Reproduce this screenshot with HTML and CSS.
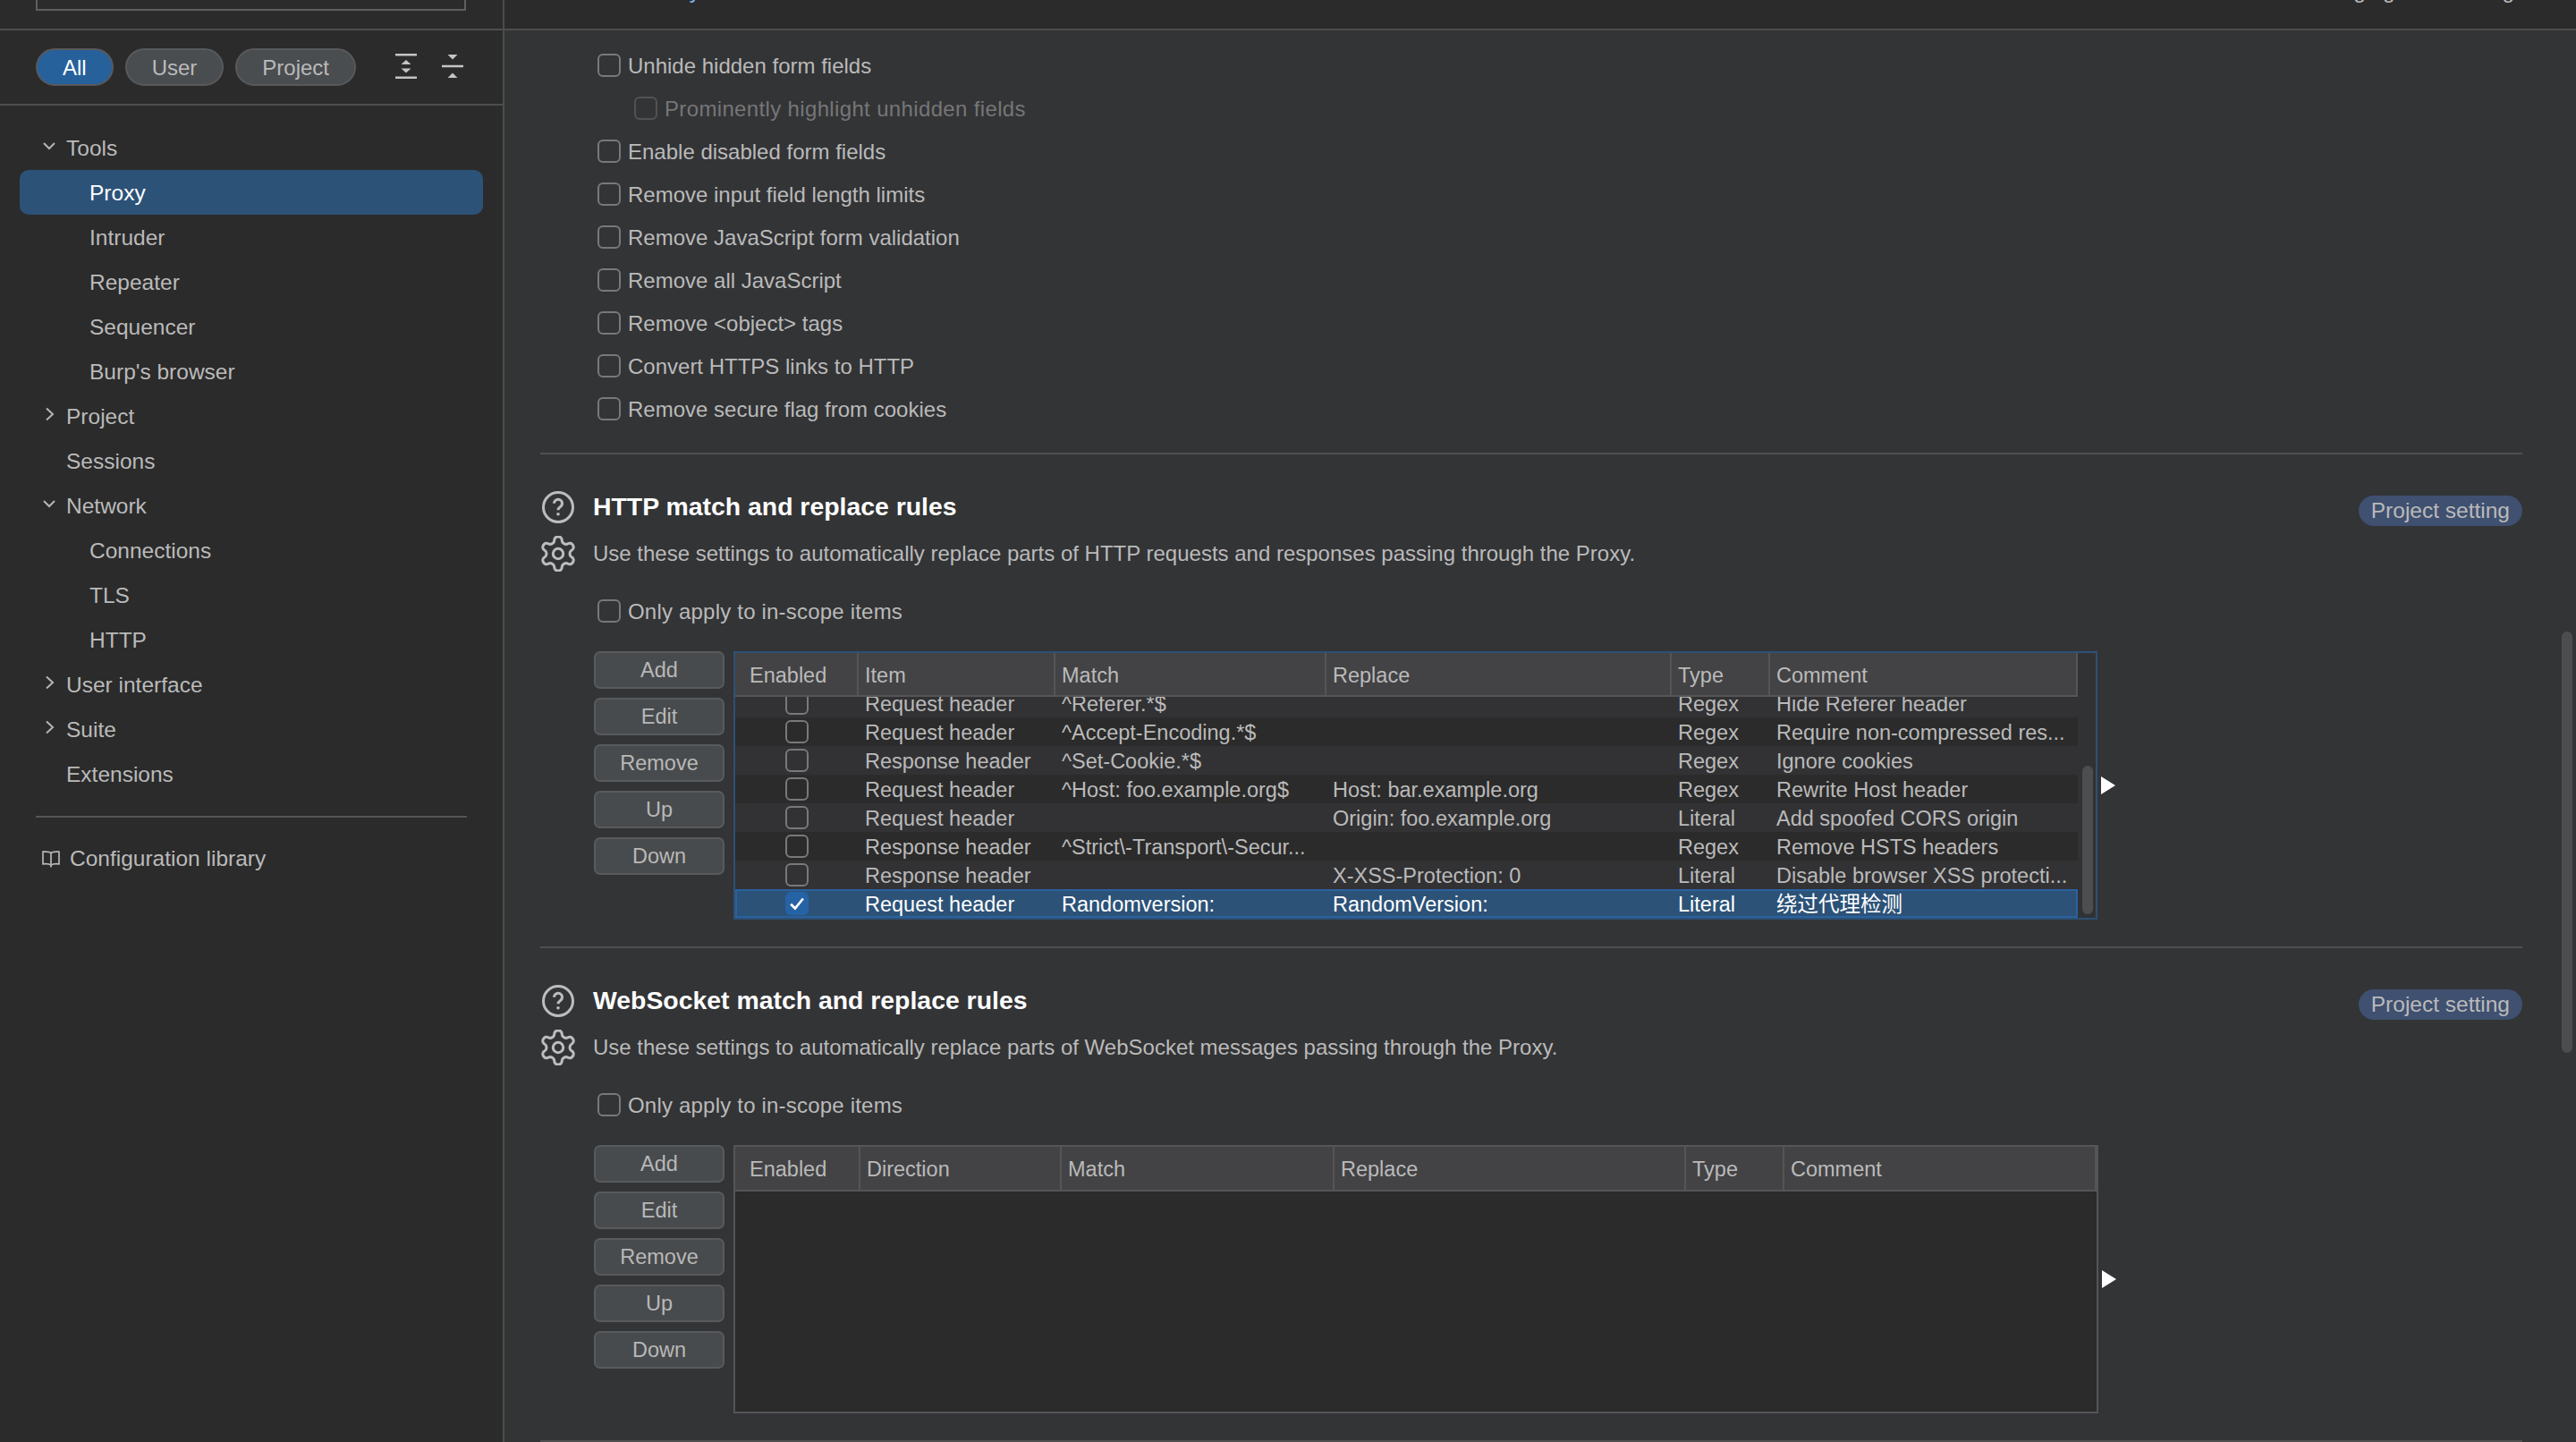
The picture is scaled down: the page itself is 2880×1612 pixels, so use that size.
FILE: index.html
```html
<!DOCTYPE html>
<html lang="en">
  <head>
    <meta charset="UTF-8" />
    <title>Proxy settings</title>
    <link rel="stylesheet" href="styles.css">
  </head>
  <body>
    <div class="app">
      <aside class="sidebar">
        <div class="side-top">
          <div class="search">
            <span>Search</span>
            <svg class="search-icon" viewBox="0 0 24 24"><circle cx="10" cy="10" r="7"/><path d="M15 15l6 6"/></svg>
          </div>
        </div>

        <div class="filters">
          <span class="pill active">All</span>
          <span class="pill">User</span>
          <span class="pill">Project</span>
          <svg class="tree-icon first" viewBox="0 0 24 28"><path d="M0 0h24v2.500H0zM0 25.500h24V28H0zM12 7l5.500 5h-11zM12 21.500l-5.500-5h11z"/></svg>
          <svg class="tree-icon" viewBox="0 0 24 28"><path d="M6.500 1h11L12 6.500zM0 12.800h24v2.400H0zM12 21.500l5.500 5.500h-11z"/></svg>
        </div>

        <nav class="nav">
          <div class="nav-row parent"><svg class="chev" viewBox="0 0 16 16"><path d="M2 5l6 6 6-6"/></svg>Tools</div>
          <div class="nav-row child selected">Proxy</div>
          <div class="nav-row child">Intruder</div>
          <div class="nav-row child">Repeater</div>
          <div class="nav-row child">Sequencer</div>
          <div class="nav-row child">Burp's browser</div>
          <div class="nav-row parent"><svg class="chev" viewBox="0 0 16 16"><path d="M5 1.500l7 6.500-7 6.500"/></svg>Project</div>
          <div class="nav-row leaf">Sessions</div>
          <div class="nav-row parent"><svg class="chev" viewBox="0 0 16 16"><path d="M2 5l6 6 6-6"/></svg>Network</div>
          <div class="nav-row child">Connections</div>
          <div class="nav-row child">TLS</div>
          <div class="nav-row child">HTTP</div>
          <div class="nav-row parent"><svg class="chev" viewBox="0 0 16 16"><path d="M5 1.500l7 6.500-7 6.500"/></svg>User interface</div>
          <div class="nav-row parent"><svg class="chev" viewBox="0 0 16 16"><path d="M5 1.500l7 6.500-7 6.500"/></svg>Suite</div>
          <div class="nav-row leaf">Extensions</div>
        </nav>

        <div class="side-divider"></div>

        <div class="config-link">
          <svg class="book" viewBox="0 0 20 20"><path d="M10 3.500C8 1.800 5 1.800 1 2.200v13.600c4-.4 7-.4 9 1.300 2-1.700 5-1.700 9-1.300V2.200c-4-.4-7-.4-9 1.300zM10 3.500V19.500"/></svg>
          Configuration library
        </div>
      </aside>

      <main class="main">
        <div class="top-bar">
          <span>Use the <span class="link">library</span></span>
          <span>managing user settings?</span>
        </div>

        <section class="section options">
          <label class="check"><span class="box"></span>Unhide hidden form fields</label>
          <label class="check sub disabled"><span class="box"></span>Prominently highlight unhidden fields</label>
          <label class="check"><span class="box"></span>Enable disabled form fields</label>
          <label class="check"><span class="box"></span>Remove input field length limits</label>
          <label class="check"><span class="box"></span>Remove JavaScript form validation</label>
          <label class="check"><span class="box"></span>Remove all JavaScript</label>
          <label class="check"><span class="box"></span>Remove &lt;object&gt; tags</label>
          <label class="check"><span class="box"></span>Convert HTTPS links to HTTP</label>
          <label class="check"><span class="box"></span>Remove secure flag from cookies</label>
        </section>

        <section class="section">
          <div class="head">
            <svg class="head-icon" viewBox="0 0 40 40"><circle cx="20" cy="20" r="16.500"/><path d="M15.500 15.800a4.500 4.500 0 1 1 7 3.700c-1.600 1.100-2.500 2-2.500 3.700"/><circle class="dot" cx="20" cy="27.800" r="1.800"/></svg>
            <h2>HTTP match and replace rules</h2>
            <span class="badge">Project setting</span>
          </div>
          <div class="head desc">
            <svg class="head-icon gear" viewBox="1.500 1.500 21 21"><path d="M12.220 2h-.44a2 2 0 0 0-2 2v.18a2 2 0 0 1-1 1.730l-.43.250a2 2 0 0 1-2 0l-.15-.08a2 2 0 0 0-2.730.730l-.22.380a2 2 0 0 0 .73 2.730l.15.100a2 2 0 0 1 1 1.720v.510a2 2 0 0 1-1 1.740l-.15.090a2 2 0 0 0-.73 2.730l.22.380a2 2 0 0 0 2.730.730l.15-.08a2 2 0 0 1 2 0l.43.250a2 2 0 0 1 1 1.730V20a2 2 0 0 0 2 2h.44a2 2 0 0 0 2-2v-.18a2 2 0 0 1 1-1.730l.43-.25a2 2 0 0 1 2 0l.15.080a2 2 0 0 0 2.730-.73l.22-.39a2 2 0 0 0-.73-2.730l-.15-.08a2 2 0 0 1-1-1.740v-.5a2 2 0 0 1 1-1.740l.15-.09a2 2 0 0 0 .73-2.730l-.22-.38a2 2 0 0 0-2.730-.73l-.15.080a2 2 0 0 1-2 0l-.43-.25a2 2 0 0 1-1-1.730V4a2 2 0 0 0-2-2z"/><circle cx="12" cy="12" r="3"/></svg>
            <p>Use these settings to automatically replace parts of HTTP requests and responses passing through the Proxy.</p>
          </div>
          <label class="check scope"><span class="box"></span>Only apply to in-scope items</label>

          <div class="rules">
            <div class="buttons">
              <button>Add</button>
              <button>Edit</button>
              <button>Remove</button>
              <button>Up</button>
              <button>Down</button>
            </div>

            <div class="table http">
              <div class="table-left">
                <div class="trow thead">
                  <div class="first-col">Enabled</div><div>Item</div><div>Match</div><div>Replace</div><div>Type</div><div>Comment</div>
                </div>
                <div class="tbody">
                  <div class="trow odd clipped">
                    <div class="cb-cell"><span class="box"></span></div><div>Request header</div><div>^Referer.*$</div><div></div><div>Regex</div><div>Hide Referer header</div>
                  </div>
                  <div class="trow even">
                    <div class="cb-cell"><span class="box"></span></div><div>Request header</div><div>^Accept-Encoding.*$</div><div></div><div>Regex</div><div>Require non-compressed res...</div>
                  </div>
                  <div class="trow odd">
                    <div class="cb-cell"><span class="box"></span></div><div>Response header</div><div>^Set-Cookie.*$</div><div></div><div>Regex</div><div>Ignore cookies</div>
                  </div>
                  <div class="trow even">
                    <div class="cb-cell"><span class="box"></span></div><div>Request header</div><div>^Host: foo.example.org$</div><div>Host: bar.example.org</div><div>Regex</div><div>Rewrite Host header</div>
                  </div>
                  <div class="trow odd">
                    <div class="cb-cell"><span class="box"></span></div><div>Request header</div><div></div><div>Origin: foo.example.org</div><div>Literal</div><div>Add spoofed CORS origin</div>
                  </div>
                  <div class="trow even">
                    <div class="cb-cell"><span class="box"></span></div><div>Response header</div><div>^Strict\-Transport\-Secur...</div><div></div><div>Regex</div><div>Remove HSTS headers</div>
                  </div>
                  <div class="trow odd">
                    <div class="cb-cell"><span class="box"></span></div><div>Response header</div><div></div><div>X-XSS-Protection: 0</div><div>Literal</div><div>Disable browser XSS protecti...</div>
                  </div>
                  <div class="trow picked">
                    <div class="cb-cell"><span class="box on"><svg viewBox="0 0 16 16"><path d="M3 8.500l3.500 3.500L13 4"/></svg></span></div><div>Request header</div><div>Randomversion:</div><div>RandomVersion:</div><div>Literal</div><div>绕过代理检测</div>
                  </div>
                </div>
              </div>
              <div class="table-scroll"><div class="thumb"></div></div>
            </div>
            <span class="arrow"></span>
          </div>
        </section>

        <section class="section">
          <div class="head">
            <svg class="head-icon" viewBox="0 0 40 40"><circle cx="20" cy="20" r="16.500"/><path d="M15.500 15.800a4.500 4.500 0 1 1 7 3.700c-1.600 1.100-2.500 2-2.500 3.700"/><circle class="dot" cx="20" cy="27.800" r="1.800"/></svg>
            <h2>WebSocket match and replace rules</h2>
            <span class="badge">Project setting</span>
          </div>
          <div class="head desc">
            <svg class="head-icon gear" viewBox="1.500 1.500 21 21"><path d="M12.220 2h-.44a2 2 0 0 0-2 2v.18a2 2 0 0 1-1 1.730l-.43.250a2 2 0 0 1-2 0l-.15-.08a2 2 0 0 0-2.730.730l-.22.380a2 2 0 0 0 .73 2.730l.15.100a2 2 0 0 1 1 1.720v.510a2 2 0 0 1-1 1.740l-.15.090a2 2 0 0 0-.73 2.730l.22.380a2 2 0 0 0 2.730.730l.15-.08a2 2 0 0 1 2 0l.43.250a2 2 0 0 1 1 1.730V20a2 2 0 0 0 2 2h.44a2 2 0 0 0 2-2v-.18a2 2 0 0 1 1-1.730l.43-.25a2 2 0 0 1 2 0l.15.080a2 2 0 0 0 2.730-.73l.22-.39a2 2 0 0 0-.73-2.730l-.15-.08a2 2 0 0 1-1-1.740v-.5a2 2 0 0 1 1-1.740l.15-.09a2 2 0 0 0 .73-2.730l-.22-.38a2 2 0 0 0-2.730-.73l-.15.080a2 2 0 0 1-2 0l-.43-.25a2 2 0 0 1-1-1.730V4a2 2 0 0 0-2-2z"/><circle cx="12" cy="12" r="3"/></svg>
            <p>Use these settings to automatically replace parts of WebSocket messages passing through the Proxy.</p>
          </div>
          <label class="check scope"><span class="box"></span>Only apply to in-scope items</label>

          <div class="rules">
            <div class="buttons">
              <button>Add</button>
              <button>Edit</button>
              <button>Remove</button>
              <button>Up</button>
              <button>Down</button>
            </div>

            <div class="table ws">
              <div class="table-left">
                <div class="trow thead">
                  <div class="first-col">Enabled</div><div>Direction</div><div>Match</div><div>Replace</div><div>Type</div><div>Comment</div>
                </div>
              </div>
            </div>
            <span class="arrow"></span>
          </div>
        </section>

        <div class="page-scroll"></div>
      </main>
    </div>
  </body>
</html>
```

FILE: styles.css
```css
* {
  box-sizing: border-box;
}

body {
  margin: 0;
  background-color: #333436;
  color: #bababa;
  font-family: "Liberation Sans", Arial, "Noto Sans CJK SC", sans-serif;
  font-size: 24.5px;
}

.app {
  display: flex;
  height: 1612px;
  overflow: hidden;
}

/* Sidebar */
.sidebar {
  width: 564px;
  flex: none;
  background-color: #2b2b2b;
  border-right: 2px solid #4c4c4c;
}

.side-top {
  height: 34px;
  padding: 0 41px 0 40px;
  border-bottom: 2px solid #4e4e4e;
  overflow: hidden;
}

.search {
  display: flex;
  justify-content: space-between;
  align-items: center;
  height: 42px;
  margin-top: -30px;
  padding: 0 21px;
  border: 2px solid #5f5f5f;
  line-height: 30px;
}

.search span {
  margin-top: -4px;
}

.search-icon {
  width: 24px;
  height: 24px;
  margin: 0 10px 2px 0;
  fill: none;
  stroke: #e0e0e0;
  stroke-width: 2.5;
}

.filters {
  display: flex;
  align-items: flex-start;
  gap: 13px;
  height: 84px;
  padding: 20px 0 0 40px;
  border-bottom: 2px solid #4e4e4e;
}

.pill {
  height: 42px;
  padding: 0 28px;
  border: 2px solid #58595b;
  border-radius: 21px;
  background-color: #4a4d50;
  font-size: 24px;
  line-height: 39px;
}

.pill.active {
  background-color: #26619c;
  color: #fff;
}

.tree-icon {
  width: 24px;
  height: 28px;
  margin: 6px 0 0 15px;
  fill: #c4c4c4;
}

.tree-icon.first {
  margin-left: 31px;
}

.nav {
  padding: 22px 22px 0;
}

.nav-row {
  display: flex;
  align-items: center;
  height: 50px;
  padding-top: 2px;
}

.nav-row.parent {
  padding-left: 25px;
}

.nav-row.leaf {
  padding-left: 52px;
}

.nav-row.child {
  padding-left: 78px;
}

.nav-row.selected {
  background-color: #2d5278;
  border-radius: 10px;
  color: #fff;
}

.chev {
  width: 16px;
  height: 16px;
  margin-right: 11px;
  margin-top: -6px;
  fill: none;
  stroke: #b5b5b5;
  stroke-width: 2;
}

.side-divider {
  height: 2px;
  margin: 22px 40px 0;
  background-color: #555;
}

.config-link {
  display: flex;
  align-items: center;
  gap: 11px;
  height: 50px;
  margin-top: 21px;
  padding-left: 47px;
}

.book {
  width: 20px;
  height: 20px;
  fill: none;
  stroke: #b8b8b8;
  stroke-width: 1.7;
}

/* Main panel */
.main {
  position: relative;
  flex: 1;
  min-width: 0;
  overflow: hidden;
}

.top-bar {
  display: flex;
  justify-content: space-between;
  height: 34px;
  padding: 0 43px 0 61px;
  background-color: #2b2b2b;
  border-bottom: 2px solid #4e4e4e;
  line-height: 30px;
  overflow: hidden;
}

.top-bar > span {
  margin-top: -25px;
}

.link {
  color: #7db7ee;
}

.section {
  margin: 0 60px 0 40px;
  padding: 34px 0 30px;
  border-bottom: 2px solid #505050;
}

.section.options {
  padding: 15px 0 25px;
}

.check {
  display: flex;
  align-items: center;
  gap: 8px;
  height: 48px;
  padding: 2px 0 0 64px;
  font-size: 24px;
}

.check.sub {
  padding-left: 105px;
  letter-spacing: 0.35px;
}

.check.disabled {
  color: #767676;
}

.check.disabled .box {
  border-color: #525252;
}

.check.scope {
  margin-top: 13px;
  letter-spacing: 0.2px;
}

.check .box {
  margin-top: -2px;
}

.box {
  display: block;
  width: 26px;
  height: 26px;
  flex: none;
  border: 2px solid #77797b;
  border-radius: 6px;
}

.box.on {
  background-color: #2563a5;
  border-color: #2563a5;
}

.box.on svg {
  display: block;
  fill: none;
  stroke: #fff;
  stroke-width: 2;
}

.head {
  display: flex;
  align-items: center;
  height: 50px;
}

.head.desc {
  height: 54px;
}

.head p {
  margin: 0;
  font-size: 24px;
}

h2 {
  margin: -2px 0 0;
  color: #fff;
  font-size: 28.4px;
  font-weight: bold;
}

.head-icon {
  width: 40px;
  height: 40px;
  flex: none;
  margin-right: 19px;
  fill: none;
  stroke: #bdbdbd;
  stroke-width: 3;
}

.head-icon .dot {
  fill: #bdbdbd;
  stroke: none;
}

.head-icon.gear {
  stroke-width: 1.6;
}

.badge {
  height: 34px;
  margin: 8px 0 0 auto;
  padding: 0 14px;
  background-color: #3f5070;
  border-radius: 17px;
  line-height: 33px;
}

/* Rule tables */
.rules {
  display: flex;
  align-items: center;
  margin: 21px 0 0 60px;
}

.buttons {
  display: flex;
  flex-direction: column;
  gap: 10px;
  width: 146px;
  height: 300px;
  margin-right: 10px;
}

button {
  height: 42px;
  padding: 0;
  background-color: #484b4d;
  border: 2px solid #585a5c;
  border-radius: 7px;
  color: #b8b8b8;
  font-family: inherit;
  font-size: 23.5px;
}

.table {
  display: flex;
  height: 300px;
  flex: none;
  border: 2px solid #555;
  background-color: #2b2b2b;
  font-size: 23.5px;
}

.table.http {
  width: 1525px;
  border-color: #2d5075;
  background-color: #313234;
}

.table.ws {
  width: 1526px;
}

.table-left {
  flex: 1;
  min-width: 0;
}

.trow {
  display: grid;
  grid-template-rows: 100%;
  height: 32px;
  line-height: 35px;
  white-space: nowrap;
}

.http .trow {
  grid-template-columns: 138px 220px 303px 386px 110px 344px;
}

.ws .trow {
  grid-template-columns: 140px 225px 305px 393px 110px 349px;
}

.trow > div {
  padding-left: 7px;
  overflow: hidden;
}

.thead {
  height: 49px;
  border-bottom: 2px solid #555;
  background-color: #434345;
  line-height: 51px;
}

.ws .thead {
  height: 50px;
}

.thead > div {
  border-right: 2px solid #555;
}

.thead .first-col {
  padding-left: 16px;
}

.tbody {
  height: 247px;
  overflow: hidden;
}

.trow.clipped {
  margin-top: -9px;
}

.trow.odd {
  background-color: #323234;
}

.trow.even {
  background-color: #2b2b2b;
}

.trow.picked {
  background-color: #2c5278;
  box-shadow: inset 0 0 0 2px #2a62a0;
  color: #fff;
}

.trow > .cb-cell {
  display: flex;
  justify-content: center;
  align-items: center;
  padding: 0;
}

.table-scroll {
  width: 20px;
  padding: 126px 3px 4px 5px;
}

.thumb {
  height: 166px;
  background-color: #4c4e50;
  border-radius: 6px;
}

.arrow {
  width: 0;
  height: 0;
  margin-left: 4px;
  border-left: 16px solid #fff;
  border-top: 10px solid transparent;
  border-bottom: 10px solid transparent;
}

.page-scroll {
  position: absolute;
  top: 706px;
  right: 4px;
  width: 12px;
  height: 471px;
  background-color: #4c4d4f;
  border-radius: 6px;
}
```
